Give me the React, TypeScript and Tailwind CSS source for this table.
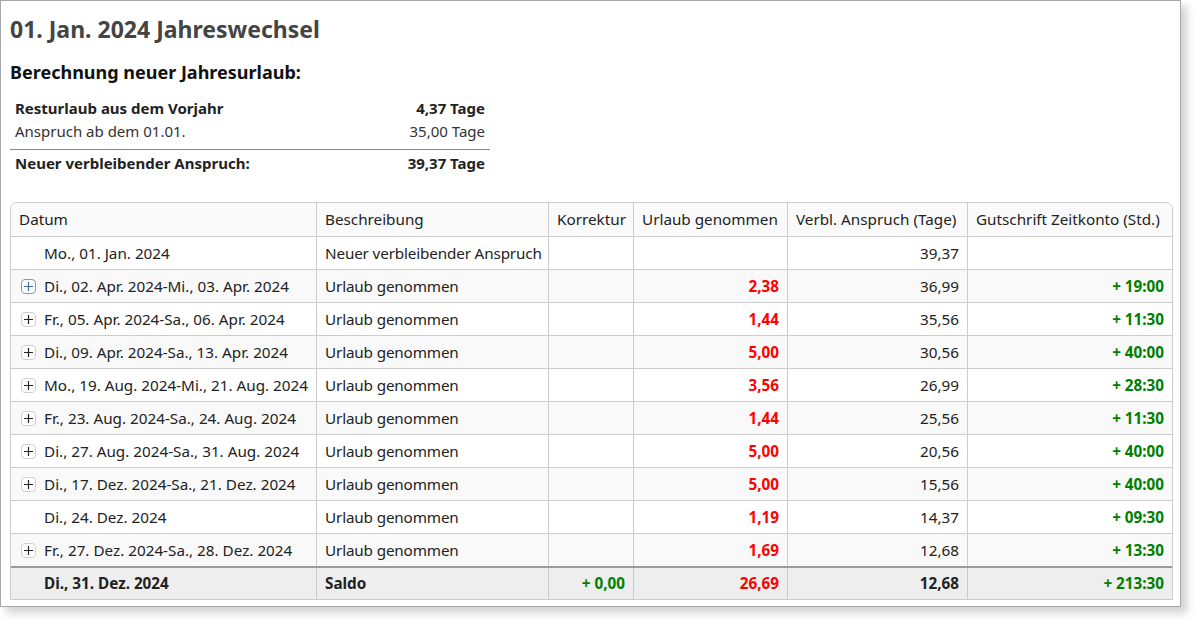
import React from 'react';

type Row = {
  datum: string;
  expand: boolean;
  beschreibung: string;
  urlaub?: string;
  anspruch: string;
  gutschrift?: string;
};

const ROWS: Row[] = [
  { datum: 'Mo., 01. Jan. 2024', expand: false, beschreibung: 'Neuer verbleibender Anspruch', anspruch: '39,37' },
  { datum: 'Di., 02. Apr. 2024-Mi., 03. Apr. 2024', expand: true, beschreibung: 'Urlaub genommen', urlaub: '2,38', anspruch: '36,99', gutschrift: '+ 19:00' },
  { datum: 'Fr., 05. Apr. 2024-Sa., 06. Apr. 2024', expand: true, beschreibung: 'Urlaub genommen', urlaub: '1,44', anspruch: '35,56', gutschrift: '+ 11:30' },
  { datum: 'Di., 09. Apr. 2024-Sa., 13. Apr. 2024', expand: true, beschreibung: 'Urlaub genommen', urlaub: '5,00', anspruch: '30,56', gutschrift: '+ 40:00' },
  { datum: 'Mo., 19. Aug. 2024-Mi., 21. Aug. 2024', expand: true, beschreibung: 'Urlaub genommen', urlaub: '3,56', anspruch: '26,99', gutschrift: '+ 28:30' },
  { datum: 'Fr., 23. Aug. 2024-Sa., 24. Aug. 2024', expand: true, beschreibung: 'Urlaub genommen', urlaub: '1,44', anspruch: '25,56', gutschrift: '+ 11:30' },
  { datum: 'Di., 27. Aug. 2024-Sa., 31. Aug. 2024', expand: true, beschreibung: 'Urlaub genommen', urlaub: '5,00', anspruch: '20,56', gutschrift: '+ 40:00' },
  { datum: 'Di., 17. Dez. 2024-Sa., 21. Dez. 2024', expand: true, beschreibung: 'Urlaub genommen', urlaub: '5,00', anspruch: '15,56', gutschrift: '+ 40:00' },
  { datum: 'Di., 24. Dez. 2024', expand: false, beschreibung: 'Urlaub genommen', urlaub: '1,19', anspruch: '14,37', gutschrift: '+ 09:30' },
  { datum: 'Fr., 27. Dez. 2024-Sa., 28. Dez. 2024', expand: true, beschreibung: 'Urlaub genommen', urlaub: '1,69', anspruch: '12,68', gutschrift: '+ 13:30' },
];

function PlusBox({ active }: { active?: boolean }) {
  return (
    <span
      className={
        'inline-flex h-[15px] w-[15px] items-center justify-center rounded-[4px] border bg-white ' +
        (active ? 'border-[#7a9cc6]' : 'border-[#d0d0d0]')
      }
    >
      <svg width="11" height="11" viewBox="0 0 11 11">
        <path d="M5.5 1v9M1 5.5h9" stroke={active ? '#3b6aa8' : '#222'} strokeWidth="1.2" fill="none" />
      </svg>
    </span>
  );
}

export default function App() {
  return (
    <div className="h-[622px] w-[1195px] bg-white font-['Noto_Sans',sans-serif] text-[#222]">
      <div className="h-[607px] w-[1181px] border border-[#a8a8a8] bg-white px-[9px] pt-[13px] shadow-[6px_6px_8px_rgba(0,0,0,0.18)]">
        <h1 className="text-[23px] font-bold leading-[30px] text-[#444]">01. Jan. 2024 Jahreswechsel</h1>
        <h2 className="mt-[16px] text-[18px] font-bold leading-[24px] text-[#111]">Berechnung neuer Jahresurlaub:</h2>

        <div className="mt-[12px] w-[480px] text-[15px]">
          <div className="flex justify-between px-[5px] py-[1px] font-bold leading-[22px]">
            <span>Resturlaub aus dem Vorjahr</span>
            <span>4,37 Tage</span>
          </div>
          <div className="flex justify-between border-b border-[#888] px-[5px] pb-[7px] leading-[22px] text-[#333]">
            <span>Anspruch ab dem 01.01.</span>
            <span>35,00 Tage</span>
          </div>
          <div className="flex justify-between px-[5px] pt-[2px] font-bold leading-[22px]">
            <span>Neuer verbleibender Anspruch:</span>
            <span>39,37 Tage</span>
          </div>
        </div>

        <div className="mt-[28px] w-[1163px] overflow-hidden rounded-t-[7px] border border-[#ccc] text-[15.25px] whitespace-nowrap">
          <div className="grid grid-cols-[306px_232px_85px_154px_180px_1fr] bg-[#fafafa] leading-[33px]">
            <div className="border-r border-[#ccc] px-[8px]">Datum</div>
            <div className="border-r border-[#ccc] px-[8px]">Beschreibung</div>
            <div className="border-r border-[#ccc] px-[8px]">Korrektur</div>
            <div className="border-r border-[#ccc] px-[8px]">Urlaub genommen</div>
            <div className="border-r border-[#ccc] px-[8px]">Verbl. Anspruch (Tage)</div>
            <div className="px-[8px]">Gutschrift Zeitkonto (Std.)</div>
          </div>

          {ROWS.map((r, i) => (
            <div
              key={i}
              className={
                'grid grid-cols-[306px_232px_85px_154px_180px_1fr] border-t border-[#ccc] leading-[32px] ' +
                (i % 2 === 1 ? 'bg-[#f9f9f9]' : 'bg-white')
              }
            >
              <div className="flex items-center gap-[8px] border-r border-[#ccc] pl-[9px] pr-[8px]">
                <span className="flex w-[16px] justify-center">{r.expand && <PlusBox active={i === 1} />}</span>
                <span>{r.datum}</span>
              </div>
              <div className="overflow-hidden border-r border-[#ccc] px-[8px] tracking-[-0.15px]">{r.beschreibung}</div>
              <div className="border-r border-[#ccc] px-[8px]" />
              <div className="border-r border-[#ccc] px-[8px] text-right font-bold text-[#ff0000]">{r.urlaub}</div>
              <div className="border-r border-[#ccc] px-[8px] text-right">{r.anspruch}</div>
              <div className="px-[8px] text-right font-bold text-[#008000]">{r.gutschrift}</div>
            </div>
          ))}

          <div className="grid grid-cols-[306px_232px_85px_154px_180px_1fr] border-t-2 border-[#999] bg-[#eee] font-bold leading-[31px]">
            <div className="border-r border-[#ccc] pl-[33px] pr-[8px]">Di., 31. Dez. 2024</div>
            <div className="border-r border-[#ccc] px-[8px]">Saldo</div>
            <div className="border-r border-[#ccc] px-[8px] text-right text-[#008000]">+ 0,00</div>
            <div className="border-r border-[#ccc] px-[8px] text-right text-[#ff0000]">26,69</div>
            <div className="border-r border-[#ccc] px-[8px] text-right">12,68</div>
            <div className="px-[8px] text-right text-[#008000]">+ 213:30</div>
          </div>
        </div>
      </div>
    </div>
  );
}
